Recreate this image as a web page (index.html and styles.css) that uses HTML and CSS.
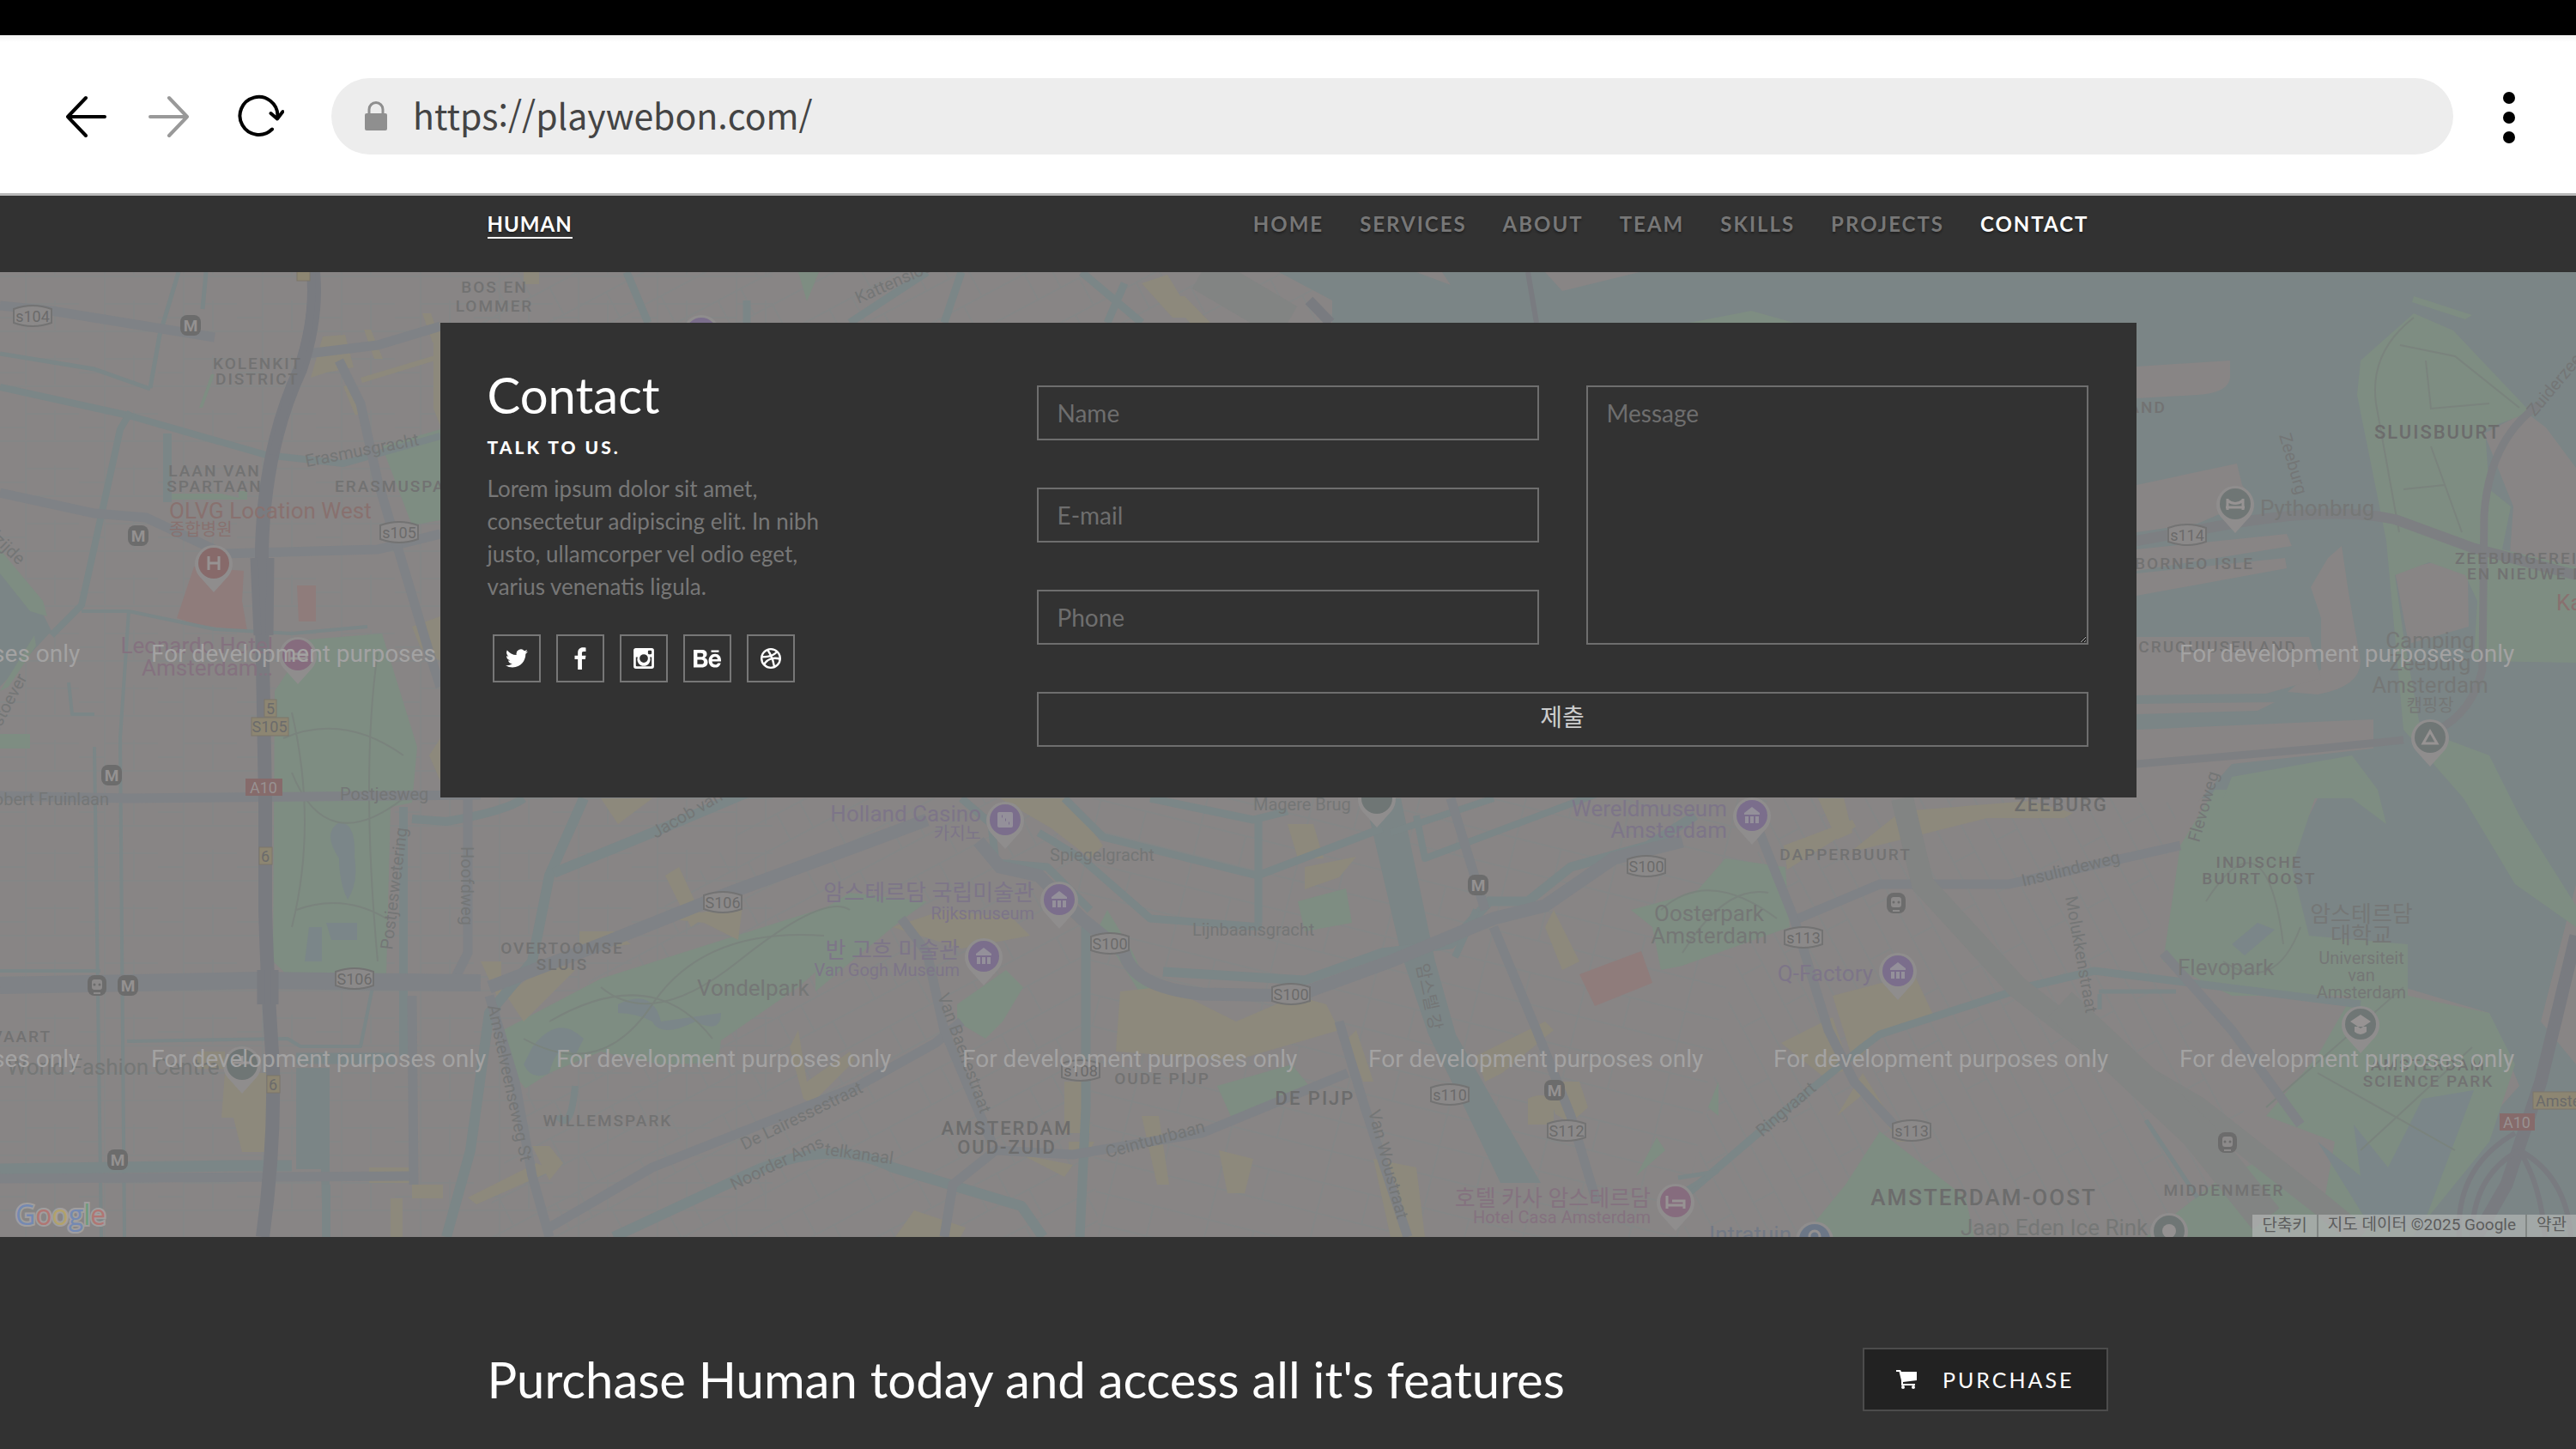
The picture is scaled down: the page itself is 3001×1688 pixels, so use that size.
FILE: index.html
```html
<!DOCTYPE html>
<html lang="ko">
<head>
<meta charset="utf-8">
<meta name="viewport" content="width=device-width, initial-scale=1">
<title>Human</title>
<link rel="stylesheet" href="styles.css">
</head>
<body>
<div class="status-strip"></div>
<div class="toolbar">
  <div class="toolbar-buttons">
    <button type="button" class="tool" aria-label="Back">
      <svg width="50" height="50" viewBox="0 0 50 50"><path d="M47 26H4M25 4L4 26l21 22"/></svg>
    </button>
    <button type="button" class="tool tool-off" aria-label="Forward">
      <svg width="50" height="50" viewBox="0 0 50 50"><path d="M3 26h43M25 4l21 22-21 22"/></svg>
    </button>
    <button type="button" class="tool" aria-label="Reload">
      <svg class="reload" width="56" height="50" viewBox="0 0 56 50"><path d="M42 40.500A22 22 0 1 1 48.500 25M40.500 22l7.500 6.500 6.500-8.500"/></svg>
    </button>
  </div>
  <label class="address">
    <svg width="26" height="34" viewBox="0 0 26 34"><path d="M5 15V9.500a8 8 0 0 1 16 0V15" fill="none" stroke="#8f8f8f" stroke-width="3"/><rect y="14" width="26" height="20" rx="2" fill="#8f8f8f"/></svg>
    <input type="url" aria-label="Address" value="https://playwebon.com/">
  </label>
  <button type="button" class="tool" aria-label="Menu">
    <svg width="16" height="66" viewBox="0 0 16 66"><g fill="#000" stroke="none"><circle cx="8" cy="12" r="7"/><circle cx="8" cy="35" r="7"/><circle cx="8" cy="58" r="7"/></g></svg>
  </button>
</div>

<header class="site-header">
  <div class="container header-row">
    <a class="brand" href="#home">HUMAN</a>
    <nav class="site-nav">
      <a href="#home">HOME</a>
      <a href="#services">SERVICES</a>
      <a href="#about">ABOUT</a>
      <a href="#team">TEAM</a>
      <a href="#skills">SKILLS</a>
      <a href="#projects">PROJECTS</a>
      <a class="current" href="#contact">CONTACT</a>
    </nav>
  </div>
</header>

<main class="map-section" id="contact">
<svg class="map" viewBox="0 317 3001 1124" preserveAspectRatio="xMidYMid slice" role="img" aria-label="Map of Amsterdam">
  <defs>
    <pattern id="gridA" width="92" height="64" patternUnits="userSpaceOnUse"><path d="M0 2H92M30 2V64M64 30V64M30 34H92M0 50H30" class="street"/></pattern>
    <pattern id="gridB" width="110" height="70" patternUnits="userSpaceOnUse" patternTransform="rotate(-28)"><path d="M0 2H110M0 36H110M24 2V36M78 36V70M54 2V36" class="street"/></pattern>
    <pattern id="gridC" width="120" height="74" patternUnits="userSpaceOnUse" patternTransform="rotate(14)"><path d="M0 2H120M0 38H120M30 2V74M84 2V38" class="street"/></pattern>
    <pattern id="gridD" width="120" height="56" patternUnits="userSpaceOnUse" patternTransform="rotate(62)"><path d="M0 2H120M0 30H120M36 2V30M90 30V56" class="street"/></pattern>
    <g id="pin"><path d="M0 34L-17 15A22 22 0 1 1 17 15z" fill="#8f8d8d"/><circle r="18"/></g>
    <g id="metro"><rect x="-12" y="-12" width="24" height="24" rx="8" fill="#6c6c6c"/><text y="7" text-anchor="middle" fill="#949191" font-weight="700" font-size="19">M</text></g>
    <g id="train"><rect x="-11" y="-12" width="22" height="24" rx="8" fill="#6c6c6c"/><rect x="-6" y="-7" width="12" height="12" rx="3" fill="#8c8a8a"/><path d="M-4 9h8" stroke="#8c8a8a" stroke-width="2"/><circle cx="-3" cy="-1" r="1.500" fill="#6c6c6c"/><circle cx="3" cy="-1" r="1.500" fill="#6c6c6c"/></g>
    <path id="shield" d="M-22 -8Q0 -16 22 -8V8Q0 16 -22 8z" fill="#8b8989" stroke="#737373" stroke-width="2"/>
    <g id="museum" fill="#94909a"><path d="M-9 -3L0 -10L9 -3V-1H-9z"/><path d="M-8 1h4v8h-4zM-2 1h4v8h-4zM4 1h4v8h-4z"/></g>
  </defs>
  <rect y="317" width="3001" height="1124" fill="#888585"/>
  <rect y="317" width="900" height="1124" fill="url(#gridA)"/>
  <path d="M560 317H1560V376H560zM560 1441L640 1190L900 930H1250L1280 1441z" fill="url(#gridB)"/>
  <path d="M1250 930H2060L2000 1200L1960 1441H1280z" fill="url(#gridC)"/>
  <path d="M2060 930H2540L2500 1100L2700 1441H1960z" fill="url(#gridD)"/>

  <!-- water -->
  <g fill="#7b8586">
    <path d="M1490 317L1552 350V376H2489V700H3001V317z"/>
    <path d="M2489 376H3001V1030L2960 1190L3001 1240V1441H2780L2840 1370L2935 1265L2900 1180L2800 1150L2700 1140L2660 1010L2700 930H2489z"/>
    <path d="M0 652L50 715L60 735L0 800z"/>
    <path d="M345 1244H384V1441H376L374 1362H345z"/>
    <path d="M1590 930H1632L1672 1120L1696 1205L1744 1290L1795 1378H1748L1706 1290L1664 1205L1632 1110z"/>
  </g>
  <!-- land in the harbour -->
  <g fill="#888585">
    <path d="M2489 427L2598 420V440Q2596 458 2560 460L2489 464z"/>
    <path d="M2489 565L2606 540L2612 565L2625 582L2560 610L2489 620z"/>
    <path d="M2489 640L2664 622L2670 636L2489 665z"/>
    <path d="M2489 668L2662 650L2664 662L2489 694z"/>
    <path d="M2692 684L2712 650L2728 636L2736 690L2750 770Q2750 800 2700 809L2665 806L2680 794L2704 780L2704 720z"/>
    <path d="M2489 742H2690L2704 790L2640 808L2489 810z"/>
    <path d="M2489 820L2650 818L2630 828L2489 832zM2489 850L2765 838V872L2600 890L2560 935H2489z"/>
    <path d="M2894 505L2942 480L2966 498L3001 545V700H2920L2928 590z"/>
    <path d="M2790 665L2840 654L2875 670L2876 730L2806 750z"/>
    <path d="M1650 317h30l10 15zM1800 317h110l-90 22z"/>
  </g>
  <!-- parks -->
  <g fill="#7e8d82">
    <path d="M320 805L360 745L445 738L486 870L480 935L455 940L450 1136H335L318 1120z"/>
    <path d="M445 520L513 500V606L480 612z"/>
    <path d="M586 1200L700 1140L905 1075L985 1050L1010 1080L930 1150L840 1212L836 1238L770 1240L700 1225L640 1250L612 1268L590 1240z"/>
    <path d="M950 1065L990 1040L1080 1050L1040 1080L950 1155z"/>
    <path d="M1115 1170L1172 1130L1192 1150L1168 1190L1148 1210L1115 1190z"/>
    <path d="M1418 1265L1505 1240L1525 1265L1436 1305z"/>
    <path d="M1512 1050L1568 1035L1575 1075L1520 1085z"/>
    <path d="M1900 1060L1975 1040L2010 1000L2080 1010L2085 1080L1960 1125L1935 1130L1925 1080z"/>
    <path d="M2540 985L2580 920H2700L2670 1010L2690 1090L2805 1100V1160L2900 1180L2930 1240L2900 1330L2810 1441H2700L2720 1330L2640 1300L2700 1230L2740 1160L2600 1160L2520 1120z"/>
    <path d="M2750 420L2812 365L2858 385L2948 480L2895 500L2900 570L2925 590L2915 640L3001 660V772L2882 770L2886 700L2872 670L2830 655L2790 670L2800 740L2820 850L2900 880L2935 950L3001 1055V1080L2930 1030L2870 930L2800 850L2780 630L2746 460z"/>
    <path d="M2600 905L2740 880L2770 920L2780 960L2740 930L2590 930z"/>
    <path d="M2190 1318L2290 1395L2300 1441H2100L2150 1380z"/>
    <path d="M2500 1441L2590 1370L2640 1350L2740 1441z"/>
    <path d="M0 640L50 700L55 718L35 712L0 668zM0 805L40 740L42 752L10 800zM0 855H35V872H0z"/>
    <path d="M1990 1290l12 -30v40zM930 317h24l-14 34zM1906 1370l24 -45l10 15z"/>
    <path d="M232 475l14 -39h4l-14 39zM198 575h60l20 5v-8h10v10h-90z"/>
    <path d="M2812 345L2880 367L2872 372L2810 352zM1968 376l72 -14 50 14z"/>
    <path d="M1290 1060l30 50 25 55 -15 -5 -50 -80z"/>
  </g>
  <!-- ponds and paths in the parks -->
  <g fill="#7b8689">
    <path d="M395 1000q-20 -30 0 -42q20 0 18 40q5 30 -8 50q-10 -20 -10 -48zM360 1080h15v40h-20zM380 1075h36v20h-30z"/>
    <path d="M620 1220q30 -40 60 -10l-10 20q-20 -20 -30 20q-20 10 -30 -10zM720 1170q40 -20 50 20l70 -10q0 25 -30 10q-40 20 -50 0q-20 -10 -40 -10z"/>
    <path d="M2600 1100l30 -25 20 8 -35 30z"/>
    <path d="M2700 1330l50 40 -8 -60 40 50 40 -80 60 -10 -60 160h-60z"/>
  </g>
  <g fill="none" stroke="#7a837d" stroke-width="2">
    <path d="M340 830Q370 960 340 1080M330 860Q400 830 470 880M340 900Q380 1000 470 930M345 1060Q400 1040 450 1070M440 760Q420 900 440 1120"/>
    <path d="M610 1210Q700 1260 760 1170T960 1090M640 1190Q760 1120 830 1210M700 1150Q760 1200 860 1120T990 1060"/>
    <path d="M2570 1050Q2640 940 2660 1100M2590 1120Q2650 1160 2680 1080M2700 1250L2860 1340M2750 1340L2880 1220M2640 1290L2800 1150"/>
    <path d="M2812 370Q2760 410 2768 470L2795 620M2796 402L2860 415L2935 475M2826 420L2832 476L2900 470M2832 520L2868 620M2800 570L2848 565"/>
    <path d="M1935 1060Q1990 1010 2070 1070M1960 1110Q2010 1030 2060 1040"/>
  </g>
  <!-- commercial areas -->
  <g fill="#8d897c">
    <path d="M362 440L376 392L402 390L412 428L380 434zM400 450l14 -4 10 34 -10 4zM424 384h8l14 34h-10zM492 365h10l12 34h-10zM420 440L513 412v6L422 446z"/>
    <path d="M480 730L513 718V770L490 755zM513 376v120l-8 -20v-90zM500 880l13 -20v50z"/>
    <path d="M1305 1155L1350 1150L1390 1165L1440 1190L1510 1160L1545 1170L1560 1200L1440 1235L1300 1225z"/>
    <path d="M1165 930H1245L1285 985L1270 1000L1225 965zM1040 1080l60 -20 80 10 20 20 -80 15z"/>
    <path d="M262 1250h50v92h-30l-10 -40h-14zM230 1225h32v20h-32z"/>
    <path d="M2135 1160L2230 1135L2252 1182L2185 1210L2160 1240zM2075 1215l60 -30 20 60 -30 10z"/>
    <path d="M2215 945l150 -12 50 14 -10 6 -90 0 -160 40zM2078 985l80 -30 4 8 -80 50zM2118 930h30l10 40 -18 8z"/>
    <path d="M1500 960h30l12 40h-30zM1520 1010l60 -12 -20 24 -40 14zM1580 1200l20 60h-12l-18 -50zM1720 1230l80 -40 10 10 -60 50 -20 10zM1810 1060l30 60 -20 10 -20 -50zM1800 1260h40l10 30 -20 18 -18 -10zM1780 1280q15 -8 30 0v30h-30z"/>
    <path d="M775 1020l16 -10 28 60 -14 10zM775 1070l90 -15 -5 40 -40 -20zM590 1160l50 -40 30 10 -60 60zM675 1085l40 0 20 15 -60 8zM560 1120l24 0 0 50 -10 -20zM700 930h60l-40 30z"/>
    <path d="M920 1220l10 -20 10 60 50 -35 6 10 -50 50 -10 -5zM545 1395l80 -40 20 8 -90 40zM430 1360h48v18h-48zM480 1380h36v16h-36zM455 1396h14v45h-14zM620 1335l20 0 16 20 -16 20z"/>
    <path d="M1240 1260h30v60h-30zM1330 1300h20l12 80h-14zM1420 1340l40 10 -10 40h-20zM1600 1350l50 10 10 81h-40zM1065 1410l60 20 -6 11h-76zM1190 1345l60 12 -10 14zM1245 1330h30l-8 16h-22z"/>
    <path d="M1330 330l30 -10 30 50h-24zM1360 345l20 0 30 31h-24zM610 317h18v14h-18z"/>
    <path d="M2140 1300l30 -50 50 80h-10l-34 -60z"/>
  </g>
  <g fill="#8f7c7b">
    <path d="M206 720L226 660L284 665L282 700L288 735L230 728z"/>
    <path d="M346 682h22v42h-20z"/>
    <path d="M1840 1135L1912 1108L1925 1145L1858 1172z"/>
  </g>
  <!-- canals -->
  <g fill="none" stroke="#7b8687" stroke-width="8" stroke-linejoin="round">
    <path d="M208 317L186 390L175 452M0 412L110 430L175 453M240 317L236 360" stroke-width="5"/>
    <path d="M0 451L150 484L310 530L400 540L513 508"/>
    <path d="M152 480L140 500L95 705L60 740"/>
    <path d="M95 712L150 712L250 733L340 738L428 730M150 712L140 860L145 1441M80 795L84 832H110M110 870L118 1441" stroke-width="4"/>
    <path d="M0 1131H117M148 1213L335 1210L350 1219H420L434 1150" stroke-width="4"/>
    <path d="M0 1362L270 1358H340M460 1233H345" stroke-width="13"/>
    <path d="M195 585L195 505" stroke-width="10"/>
    <path d="M480 954L520 957Q590 945 610 930M470 940V1230M380 1380V1441" stroke-width="10"/>
    <path d="M680 930L640 1020L620 1120L570 1180L548 1340L520 1441" stroke-width="12"/>
    <path d="M645 1017L760 970L890 915" stroke-width="12"/>
    <path d="M715 1441L850 1378Q960 1320 1040 1360L1190 1405L1215 1441" stroke-width="12"/>
    <path d="M670 1265Q665 1320 650 1300" stroke-width="8"/>
    <path d="M1120 930L1155 960L1160 1005L1220 1010L1270 1060M1240 930L1285 975L1465 1020L1610 965M1210 970L1260 1000L1340 1070L1470 1080M1340 930L1460 955L1500 945M1466 955V1075" stroke-width="9"/>
    <path d="M1265 1080V1290L1258 1441M1355 1132L1520 1142L1610 1110L1690 1100L1735 1050L1780 1050L1830 1010L1920 985L1975 950" stroke-width="11"/>
    <path d="M1650 950L1660 1000L1860 925M1620 970L1740 930M1695 1115L1720 1060" stroke-width="8"/>
    <path d="M1955 1400L2060 1310L2170 1220L2190 1205L2360 1150L2440 1131L2750 1170" stroke-width="9"/>
    <path d="M1960 1388L2000 1365L1955 1372M2445 1155h90M2446 1158v18M2500 1305l60 90" stroke-width="5"/>
    <path d="M730 317L755 376M1080 317L990 376M1120 317L1100 376M1260 317L1330 376M1310 330L1290 376M870 350v26" stroke-width="9"/>
  </g>
  <!-- main roads -->
  <g fill="none" stroke="#7f8286" stroke-width="11">
    <path d="M0 356L60 362L250 393M0 574L110 598L170 603L260 645L440 640L513 622"/>
    <path d="M358 412L440 402L513 380M395 420L420 470L440 560L500 760L513 800"/>
    <path d="M0 927L150 930L560 926M0 1373L480 1370"/>
    <path d="M545 930V1110L530 1140M480 1160L482 1380"/>
    <path d="M570 1150L700 1100L850 1040L1000 985L1080 955" stroke-width="15"/>
    <path d="M0 1148L300 1142L560 1145" stroke-width="20"/>
    <path d="M570 1160L600 1260L620 1370L640 1441M640 1430L760 1360L1000 1265L1090 1215L1120 1190"/>
    <path d="M1050 1070L1080 1110L1100 1200L1155 1330M1100 1441L1110 1380L1160 1340L1250 1345L1400 1320L1570 1250"/>
    <path d="M1140 980L1165 1010L1210 1020L1260 1070L1310 1110Q1320 1150 1400 1158L1510 1160L1620 1120L1740 1070L1800 1055L1880 1000L1960 980" stroke-width="15"/>
    <path d="M1560 1190L1590 1290L1640 1441M1740 1080L1790 1200L1830 1300L1860 1400M1690 930L1730 1060"/>
    <path d="M2050 970L2090 1070L2130 1200L2160 1260L2215 1320"/>
    <path d="M2095 1070L2190 1030L2340 1030L2540 985M2520 1110L2600 1200L2680 1310"/>
  </g>
  <g fill="none" stroke="#828483" stroke-width="26">
    <path d="M2216 930L2240 1030L2350 1150L2440 1220L2560 1290L2700 1400L2750 1441"/>
    <path d="M2400 1170L2560 1320L2640 1420" stroke-width="40"/>
    <path d="M1400 317L1500 376" stroke-width="44"/>
  </g>
  <!-- motorways -->
  <g fill="none" stroke="#797b80">
    <path d="M365 317Q370 370 350 430Q308 520 305 640V720L309 930V1060Q312 1160 318 1240Q320 1340 306 1441" stroke-width="16"/>
    <path d="M363 317Q366 390 338 450L318 530M296 650L300 740M315 650L314 740M304 1130v40M320 1130v40" stroke-width="9"/>
    <path d="M2489 630L2600 610Q2720 590 2790 605L2880 638L3001 670" stroke-width="12" stroke="#7d7f82"/>
    <path d="M2960 470Q2900 510 2894 600L2892 780Q2880 830 2840 850M2489 890L2700 872L2800 862" stroke-width="9" stroke="#7d7f82"/>
    <path d="M3001 1090L2960 1260L2920 1380L2885 1441" stroke-width="15"/>
    <path d="M2930 1320Q2860 1360 2865 1441M2935 1340Q2880 1370 2880 1441M2935 1340Q2990 1370 2995 1441M2935 1340Q2960 1380 2965 1441" stroke-width="6"/>
    <path d="M1780 317L1790 376" stroke-width="6"/>
    <path d="M1525 350L1550 376" stroke-width="12"/>
  </g>

  <!-- route numbers -->
  <g class="route">
    <use href="#shield" x="38" y="368"/><text x="38" y="375">s104</text>
    <use href="#shield" x="465" y="620"/><text x="465" y="627">s105</text>
    <use href="#shield" x="842" y="1051"/><text x="842" y="1058">S106</text>
    <use href="#shield" x="413" y="1140"/><text x="413" y="1147">S106</text>
    <use href="#shield" x="1293" y="1099"/><text x="1293" y="1106">S100</text>
    <use href="#shield" x="1504" y="1158"/><text x="1504" y="1165">S100</text>
    <use href="#shield" x="1918" y="1009"/><text x="1918" y="1016">S100</text>
    <use href="#shield" x="1259" y="1247"/><text x="1259" y="1254">s108</text>
    <use href="#shield" x="1689" y="1275"/><text x="1689" y="1282">s110</text>
    <use href="#shield" x="1825" y="1317"/><text x="1825" y="1324">S112</text>
    <use href="#shield" x="2101" y="1092"/><text x="2101" y="1099">s113</text>
    <use href="#shield" x="2227" y="1317"/><text x="2227" y="1324">s113</text>
    <use href="#shield" x="2548" y="623"/><text x="2548" y="630">s114</text>
  </g>
  <g fill="#8d8672" stroke="#7c776a">
    <rect x="346" y="310" width="15" height="17"/><rect x="308" y="815" width="14" height="20"/><rect x="293" y="836" width="43" height="21"/><rect x="302" y="987" width="15" height="20"/><rect x="311" y="1253" width="15" height="20"/><rect x="2951" y="1272" width="60" height="20"/>
  </g>
  <g class="route">
    <text x="315" y="832">5</text><text x="314" y="853">S105</text><text x="309" y="1004">6</text><text x="318" y="1270">6</text><text x="2954" y="1289" text-anchor="start">Amste</text>
  </g>
  <g fill="#866b6b"><rect x="286" y="907" width="43" height="20"/><rect x="2912" y="1297" width="41" height="20"/></g>
  <g class="route route-light"><text x="307" y="924">A10</text><text x="2932" y="1314">A10</text></g>

  <!-- stations -->
  <use href="#metro" x="222" y="379"/><use href="#metro" x="161" y="624"/><use href="#metro" x="130" y="903"/>
  <use href="#metro" x="149" y="1148"/><use href="#metro" x="137" y="1351"/><use href="#metro" x="1722" y="1031"/><use href="#metro" x="1811" y="1270"/>
  <use href="#train" x="113" y="1148"/><use href="#train" x="2209" y="1052"/><use href="#train" x="2595" y="1331"/>

  <!-- place pins -->
  <g fill="#7b6e8c">
    <use href="#pin" x="1171" y="955"/><use href="#pin" x="1234" y="1048"/><use href="#pin" x="1146" y="1114"/><use href="#pin" x="2041" y="950"/><use href="#pin" x="2211" y="1131"/><use href="#pin" x="817" y="388"/>
  </g>
  <g fill="#866c7e"><use href="#pin" x="347" y="763"/><use href="#pin" x="1952" y="1400"/></g>
  <g fill="#876a6a"><use href="#pin" x="249" y="656"/></g>
  <g fill="#6f7675"><use href="#pin" x="282" y="1240"/><use href="#pin" x="1604" y="930"/><use href="#pin" x="2604" y="587"/><use href="#pin" x="2831" y="859"/><use href="#pin" x="2750" y="1193"/><use href="#pin" x="2527" y="1434"/></g>
  <g fill="#6c7787"><use href="#pin" x="2114" y="1444"/></g>
  <use href="#museum" x="1234" y="1048"/><use href="#museum" x="1146" y="1114"/><use href="#museum" x="2041" y="950"/><use href="#museum" x="2211" y="1131"/>
  <rect x="1162" y="946" width="18" height="18" rx="2" fill="#94909a"/><path d="M1167 951h1M1171 955h1M1175 959h1" stroke="#7b6e8c" stroke-width="3"/>
  <g fill="none" stroke="#979393" stroke-width="3">
    <path d="M243 648v16M255 648v16M243 656h12M337 756v15M337 767h20v4M343 762h14v5M1942 1393v15M1942 1404h20v4M1948 1399h14v5"/>
    <path d="M2595 581v13M2613 581v13M2593 591h22M2595 583q9 7 18 0M2823 866l8 -14 8 14zM272 1238h20M282 1230v10"/>
  </g>
  <path d="M2738 1190l12 -8 12 8 -12 8zM2743 1196v6q7 6 14 0v-6" fill="#979393"/>
  <circle cx="2527" cy="1434" r="8" fill="#949191"/><circle cx="2114" cy="1440" r="6" fill="none" stroke="#949191" stroke-width="3"/>

  <!-- districts -->
  <g class="district">
    <text x="576" y="341">BOS EN</text><text x="576" y="363">LOMMER</text>
    <text x="300" y="430">KOLENKIT</text><text x="300" y="448">DISTRICT</text>
    <text x="250" y="555">LAAN VAN</text><text x="250" y="573">SPARTAAN</text>
    <text x="390" y="573" text-anchor="start">ERASMUSPARK</text>
    <text x="655" y="1111">OVERTOOMSE</text><text x="655" y="1130">SLUIS</text>
    <text x="60" y="1214" text-anchor="end">AVAART</text>
    <text x="708" y="1312">WILLEMSPARK</text>
    <text x="1354" y="1263">OUDE PIJP</text>
    <text x="2150" y="1002">DAPPERBUURT</text>
    <text x="2632" y="1011">INDISCHE</text><text x="2632" y="1030">BUURT OOST</text>
    <text x="2829" y="1247">AMSTERDAM</text><text x="2829" y="1266">SCIENCE PARK</text>
    <text x="2591" y="1393">MIDDENMEER</text>
    <text x="2524" y="481" text-anchor="end">KNSM-EILAND</text>
    <text class="wide" x="2626" y="663" text-anchor="end">BORNEO ISLE</text>
    <text class="wide" x="2676" y="760" text-anchor="end">CRUQUIUSEILAND</text>
    <text x="2860" y="657" text-anchor="start">ZEEBURGEREILAND</text><text x="2874" y="675" text-anchor="start">EN NIEUWE DIEP</text>
  </g>
  <g class="district district-strong">
    <text x="2840" y="511">SLUISBUURT</text><text x="2401" y="945">ZEEBURG</text><text x="1532" y="1287">DE PIJP</text>
    <text x="1173" y="1322">AMSTERDAM</text><text x="1173" y="1344">OUD-ZUID</text>
    <text class="big" x="2311" y="1404">AMSTERDAM-OOST</text>
  </g>

  <!-- streets and canals -->
  <g class="road">
    <text transform="translate(357 544) rotate(-11)">Erasmusgracht</text>
    <text transform="translate(-48 592) rotate(44)">Noordzijde</text>
    <text transform="translate(-12 872) rotate(-62)">Westoever</text>
    <text x="127" y="938" text-anchor="end">Robert Fruinlaan</text>
    <text x="396" y="932">Postjesweg</text>
    <text transform="translate(457 1107) rotate(-83)">Postjeswetering</text>
    <text transform="translate(537 986) rotate(90)">Hoofdweg</text>
    <text transform="translate(568 1172) rotate(78)">Amstelveenseweg St</text>
    <text transform="translate(867 1340) rotate(-26)">De Lairessestraat</text>
    <text transform="translate(764 977) rotate(-30)">Jacob van Lennep</text>
    <text transform="translate(855 1387) rotate(-26)">Noorder Ams</text>
    <text transform="translate(960 1345) rotate(8)">telkanaal</text>
    <text x="1223" y="1003">Spiegelgracht</text>
    <text x="1389" y="1090">Lijnbaansgracht</text>
    <text x="1460" y="944">Magere Brug</text>
    <text transform="translate(1650 1124) rotate(78)">암스텔 강</text>
    <text transform="translate(1092 1160) rotate(70)">Van Baerlestraat</text>
    <text transform="translate(1290 1349) rotate(-15)">Ceintuurbaan</text>
    <text transform="translate(1594 1295) rotate(75)">Van Woustraat</text>
    <text transform="translate(2357 1033) rotate(-14)">Insulindeweg</text>
    <text transform="translate(2406 1045) rotate(80)">Molukkenstraat</text>
    <text transform="translate(2562 982) rotate(-74)">Flevoweg</text>
    <text transform="translate(2053 1325) rotate(-41)">Ringvaart</text>
    <text transform="translate(2655 507) rotate(74)">Zeeburg</text>
    <text transform="translate(2953 486) rotate(-50)">Zuiderzeeweg</text>
    <text transform="translate(1000 354) rotate(-24)">Kattensloot</text>
  </g>

  <!-- places -->
  <g class="place">
    <text x="8" y="1252">World Fashion Centre</text>
    <text x="812" y="1160">Vondelpark</text>
    <text x="1991" y="1073" text-anchor="middle">Oosterpark</text><text x="1991" y="1099" text-anchor="middle">Amsterdam</text>
    <text x="2537" y="1136">Flevopark</text>
    <text x="2633" y="601">Pythonbrug</text>
    <text x="2284" y="1439">Jaap Eden Ice Rink</text>
    <text x="2831" y="755" text-anchor="middle">Camping</text><text x="2831" y="781" text-anchor="middle">Zeeburg</text><text x="2831" y="807" text-anchor="middle">Amsterdam</text>
    <text class="sub" x="2831" y="829" text-anchor="middle">캠핑장</text>
    <text x="2751" y="1074" text-anchor="middle">암스테르담</text><text x="2751" y="1099" text-anchor="middle">대학교</text>
    <text class="sub" x="2751" y="1123" text-anchor="middle">Universiteit</text><text class="sub" x="2751" y="1143" text-anchor="middle">van</text><text class="sub" x="2751" y="1163" text-anchor="middle">Amsterdam</text>
  </g>
  <g class="place place-culture" text-anchor="end">
    <text x="1143" y="957">Holland Casino</text><text class="sub" x="1143" y="978">카지노</text>
    <text x="1205" y="1049">암스테르담 국립미술관</text><text class="sub" x="1205" y="1071">Rijksmuseum</text>
    <text x="1118" y="1116">반 고흐 미술관</text><text class="sub" x="1118" y="1137">Van Gogh Museum</text>
    <text x="2012" y="951">Wereldmuseum</text><text x="2012" y="976">Amsterdam</text>
    <text x="2182" y="1143">Q-Factory</text>
  </g>
  <g class="place place-hotel" text-anchor="end">
    <text x="318" y="761">Leonardo Hotel</text><text x="318" y="787">Amsterdam…</text>
    <text x="1923" y="1405">호텔 카사 암스테르담</text><text class="sub" x="1923" y="1425">Hotel Casa Amsterdam</text>
  </g>
  <g class="place place-care"><text x="197" y="604">OLVG Location West</text><text class="sub" x="197" y="624">종합병원</text><text x="2978" y="711">Kant</text></g>
  <g class="place place-shop"><text x="2087" y="1447" text-anchor="end">Intratuin</text></g>

  <g class="notice">
    <text x="-297" y="771">For development purposes only</text><text x="176" y="771">For development purposes only</text><text x="2539" y="771">For development purposes only</text>
    <text x="-297" y="1243">For development purposes only</text><text x="176" y="1243">For development purposes only</text><text x="648" y="1243">For development purposes only</text><text x="1121" y="1243">For development purposes only</text><text x="1594" y="1243">For development purposes only</text><text x="2066" y="1243">For development purposes only</text><text x="2539" y="1243">For development purposes only</text>
  </g>
  <text class="logo" x="18" y="1427"><tspan fill="#7489b2">G</tspan><tspan fill="#b07673">o</tspan><tspan fill="#b3a26b">o</tspan><tspan fill="#7489b2">g</tspan><tspan fill="#6f9b7b">l</tspan><tspan fill="#b07673">e</tspan></text>
</svg>

<section class="card">
  <div class="intro">
    <h1>Contact</h1>
    <h2>TALK TO US.</h2>
    <p>Lorem ipsum dolor sit amet, consectetur adipiscing elit. In nibh justo, ullamcorper vel odio eget, varius venenatis ligula.</p>
    <div class="social">
      <a href="#twitter" aria-label="Twitter"><svg width="26" height="26" viewBox="0 0 24 24"><path d="M23.950 4.600a10 10 0 0 1-2.800.8 4.900 4.900 0 0 0 2.100-2.700c-1 .6-2 1-3.100 1.200a4.900 4.900 0 0 0-8.400 4.500C7.700 8.200 4.100 6.300 1.700 3.200a4.900 4.900 0 0 0 1.500 6.600c-.8 0-1.600-.2-2.200-.6v.1a4.900 4.900 0 0 0 3.900 4.800c-.7.2-1.500.2-2.200.1a4.900 4.900 0 0 0 4.600 3.400A9.900 9.900 0 0 1 0 19.500 14 14 0 0 0 7.500 21.700c9.100 0 14-7.500 14-14v-.6c1-.7 1.800-1.600 2.450-2.500z"/></svg></a>
      <a href="#facebook" aria-label="Facebook"><svg width="26" height="26" viewBox="0 0 24 24"><path d="M18 .5v4h-2.300c-1.600 0-1.900.8-1.900 1.900V9H18l-.6 4h-3.600v11H9.400V13H6V9h3.400V6C9.400 2.500 11.500.300 14.800.300c1.500 0 2.800.1 3.200.2z"/></svg></a>
      <a href="#instagram" aria-label="Instagram"><svg width="26" height="26" viewBox="0 0 24 24"><path fill-rule="evenodd" d="M3.500 1h17A2.500 2.500 0 0 1 23 3.500v17a2.500 2.500 0 0 1-2.500 2.500h-17A2.500 2.500 0 0 1 1 20.500v-17A2.500 2.500 0 0 1 3.500 1zM3.500 10.500V19.500a1 1 0 0 0 1 1h15a1 1 0 0 0 1-1v-9h-2a7 7 0 1 1-13 0zM12 7.500a4.500 4.500 0 1 0 0 9 4.500 4.500 0 0 0 0-9zM17.500 3.500a1 1 0 0 0-1 1v2a1 1 0 0 0 1 1h2a1 1 0 0 0 1-1v-2a1 1 0 0 0-1-1z"/></svg></a>
      <a href="#behance" aria-label="Behance"><svg width="32" height="22" viewBox="0 0 32 22"><path fill-rule="evenodd" d="M0 1h9.500c4 0 6 2 6 5 0 2-1 3.400-2.800 4.300 2.500.8 3.800 2.700 3.800 5.200 0 3.800-2.800 6-7 6H0zM4.400 4.700v4.600h4.400c1.500 0 2.500-.8 2.500-2.300S10.300 4.700 8.800 4.700zM4.400 12.600v5.200H9c1.900 0 3-.9 3-2.600s-1.100-2.600-3-2.600zM25 5.800c4.500 0 7 3.200 7 7.500v1.300H21.500c.2 2.300 1.500 3.600 3.700 3.600 1.500 0 2.600-.8 3-1.800h3.500c-1 3.500-3.300 5.200-6.600 5.200-4.600 0-7.500-3.200-7.500-7.900 0-4.600 3.100-7.900 7.400-7.900zM21.500 11.900H28c-.2-1.900-1.200-3-3-3s-3.100 1.100-3.500 3zM20.500 1.500h9v2.200h-9z"/></svg></a>
      <a href="#dribbble" aria-label="Dribbble"><svg width="26" height="26" viewBox="0 0 24 24"><g fill="none" stroke="#fff" stroke-width="2.200"><circle cx="12" cy="12" r="10"/><path d="M8 2.300c4 5 6.500 11 7.800 18.800M2 10.500c7 0 13-1 17-6M4.500 19C7.500 13 14 10.500 22 12.500"/></g></svg></a>
    </div>
  </div>
  <form class="form">
    <div class="fields">
      <input type="text" placeholder="Name" aria-label="Name">
      <input type="email" placeholder="E-mail" aria-label="E-mail">
      <input type="tel" placeholder="Phone" aria-label="Phone">
    </div>
    <textarea placeholder="Message" aria-label="Message"></textarea>
    <button type="submit">제출</button>
  </form>
</section>

<div class="credits">
  <button type="button">단축키</button>
  <span>지도 데이터 ©2025 Google</span>
  <a href="#terms">약관</a>
</div>
</main>

<footer class="site-footer">
  <div class="container footer-row">
    <h2>Purchase Human today and access all it's features</h2>
    <a class="purchase" href="#purchase">
      <svg width="24" height="22" viewBox="0 0 24 22"><path d="M0 0h5l1 2h18v10L8 14v2h14v2H6V12L3.500 2H0z"/><circle cx="8" cy="20" r="2"/><circle cx="20" cy="20" r="2"/></svg>
      PURCHASE
    </a>
  </div>
</footer>
</body>
</html>
```
FILE: styles.css
```css
* { box-sizing: border-box; }

body {
  margin: 0;
  min-height: 100vh;
  display: flex;
  flex-direction: column;
  background: #323232;
  color: #fff;
  font-family: Lato, "Noto Sans CJK KR", sans-serif;
}

h1, h2, p { margin: 0; }
a { color: inherit; text-decoration: none; }

/* browser bar */
.status-strip { height: 41px; background: #000; }

.toolbar {
  display: flex;
  align-items: center;
  height: 187px;
  padding: 4px 70px 0 75px;
  background: linear-gradient(#f2f2f2, #fff 8px);
  border-bottom: 3px solid #b8b8b8;
}

.toolbar-buttons { display: flex; gap: 47px; width: 311px; }

.tool {
  display: flex;
  padding: 0;
  border: 0;
  background: none;
}
.tool svg { fill: none; stroke: #000; stroke-width: 4; stroke-linecap: round; stroke-linejoin: round; }
.tool-off svg { stroke: #999; }
.tool .reload { margin-left: 6px; }

.address {
  flex: 1;
  display: flex;
  align-items: center;
  gap: 30px;
  height: 89px;
  margin-right: 57px;
  padding: 0 39px;
  border-radius: 45px;
  background: #ededed;
}
.address input {
  flex: 1;
  height: 64px;
  padding: 0 0 4px;
  border: 0;
  background: none;
  color: #444;
  font: 41px/60px "Noto Sans CJK KR", sans-serif;
}

/* site header */
.container {
  width: 100%;
  max-width: 1976px;
  margin: 0 auto;
  padding: 0 55px;
}
.site-header { height: 89px; background: #323232; }
.header-row {
  display: flex;
  justify-content: space-between;
  padding-top: 18px;
  font-size: 24px;
  line-height: 30px;
  font-weight: 700;
  letter-spacing: 1px;
  text-shadow: 0 2px 3px rgba(0, 0, 0, .4);
}
.brand { border-bottom: 2px solid #fff; }
.site-nav { display: flex; gap: 42px; color: #777; letter-spacing: 2px; }
.site-nav .current { color: #fff; }

/* map */
.map-section { position: relative; height: 1124px; padding-top: 59px; }
.map { position: absolute; inset: 0; width: 100%; height: 100%; font-family: Roboto, "Noto Sans CJK KR", sans-serif; }
.street { fill: none; stroke: #848686; stroke-width: 2; }
.district { fill: #727272; font-size: 19px; font-weight: 500; letter-spacing: 2px; text-anchor: middle; }
.district [text-anchor="start"] { text-anchor: start; }
.district [text-anchor="end"] { text-anchor: end; }
.district-strong { fill: #6c6c6c; font-size: 22px; }
.district .big { font-size: 26px; }
.road { fill: #747676; font-size: 20px; }
.place { fill: #757776; font-size: 26px; }
.place-culture { fill: #7d7588; }
.place-hotel { fill: #84727f; }
.place-care { fill: #88716f; }
.place-shop { fill: #727985; }
.place .sub { font-size: 20px; }
.route { fill: #6b6b6b; font-size: 18px; text-anchor: middle; }
.route-light { fill: #989292; }
.notice { fill: #a3a2a2; font-size: 28px; }
.logo { font: 500 32px "Open Sans", sans-serif; stroke: #a09e9e; stroke-width: 4px; paint-order: stroke; }

.credits {
  position: absolute;
  right: 0;
  bottom: 0;
  display: flex;
  height: 26px;
  background: rgba(180, 182, 181, .7);
  color: #5c5c5c;
  font: 19px/24px Roboto, "Noto Sans CJK KR", sans-serif;
}
.credits > * { padding: 0 11px; border: 0; background: none; color: inherit; font: inherit; }
.credits > * + * { border-left: 2px solid #828785; }

/* contact card */
.card {
  position: relative;
  display: grid;
  grid-template-columns: repeat(3, 1fr);
  gap: 55px;
  max-width: 1976px;
  margin: 0 auto;
  padding: 73px 56px 59px 55px;
  background: #323232;
}
.intro { margin-top: -23px; }
.intro h1 { font-size: 58px; line-height: 68px; font-weight: 400; }
.intro h2 { margin-top: 12px; font-size: 21px; line-height: 30px; font-weight: 900; letter-spacing: 3px; }
.intro p { max-width: 420px; margin-top: 14px; color: #777; font-size: 26px; line-height: 38px; }
.social { display: flex; gap: 18px; margin: 37px 0 0 6px; }
.social a {
  display: flex;
  align-items: center;
  justify-content: center;
  width: 56px;
  height: 56px;
  border: 2px solid #777;
}
.social svg { fill: #fff; }

.form { grid-column: span 2; display: grid; grid-template-columns: 1fr 1fr; gap: 55px; }
.fields { display: grid; gap: 55px; }
.form input, .form textarea, .form button {
  display: block;
  width: 100%;
  height: 64px;
  padding: 13px 22px;
  border: 2px solid #6e6e6e;
  border-radius: 0;
  background: none;
  color: #ccc;
  font: 28px/34px Lato, "Noto Sans CJK KR", sans-serif;
}
.form textarea { height: 302px; }
.form button { grid-column: 1 / -1; padding: 9px 22px 15px; }
.form ::placeholder { color: #6e6e6e; opacity: 1; }

/* footer */
.site-footer { flex: 1; padding-top: 129px; background: #323232; }
.footer-row { display: flex; align-items: center; justify-content: space-between; padding-right: 33px; }
.footer-row h2 { font-size: 58px; line-height: 74px; font-weight: 400; }
.purchase {
  display: flex;
  align-items: center;
  gap: 30px;
  height: 74px;
  padding: 0 37px;
  border: 2px solid #4c4c4c;
  background: #222;
  font-size: 25px;
  letter-spacing: 3px;
}
.purchase svg { fill: #fff; }
```
